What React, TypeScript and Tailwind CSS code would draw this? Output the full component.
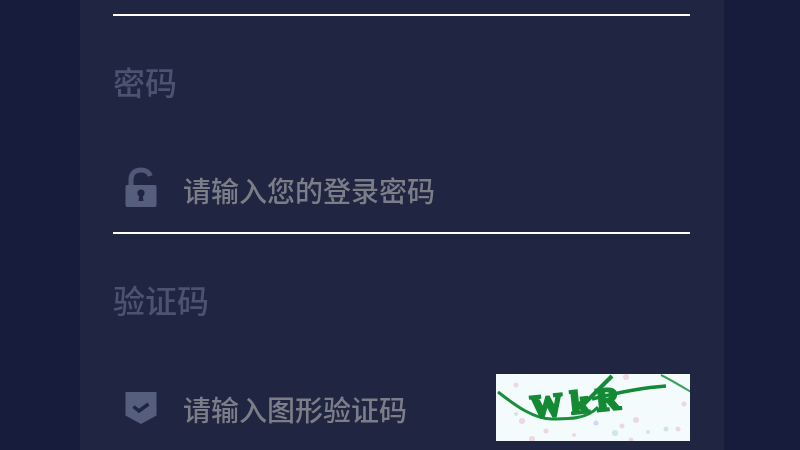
const font = "font-['Liberation_Sans','Noto_Sans_CJK_SC',sans-serif]";

function LockIcon() {
  return (
    <svg width="32" height="42" viewBox="0 0 32 42" className="mb-[4px] shrink-0 blur-[0.6px]">
      <path d="M6 20v-7.500C6 6.500 10 3 16 3c4.500 0 8 2.300 9.300 6" fill="none" stroke="#505877" strokeWidth="5" />
      <path d="M2 18h28a1.500 1.500 0 0 1 1.500 1.500V38a2 2 0 0 1-2 2h-27a2 2 0 0 1-2-2V19.500A1.500 1.500 0 0 1 2 18z" fill="#565e7d" />
      <circle cx="16" cy="26" r="3.600" fill="#202541" />
      <path d="M14.500 27h3l1 7h-5z" fill="#202541" />
    </svg>
  );
}

function ShieldIcon() {
  return (
    <svg width="32" height="34" viewBox="0 0 32 34" className="mb-[2px] shrink-0 blur-[0.6px]">
      <path d="M0.500 1h31v23.500L16 33 0.500 24.500z" fill="#565e7d" />
      <path d="M8.500 15.500l5.500 4.500 9.500-7" fill="none" stroke="#202541" strokeWidth="3.500" />
    </svg>
  );
}

function Captcha() {
  return (
    <svg width="194" height="67" viewBox="0 0 194 67" className="mb-[3px] shrink-0 bg-[#f4fbfd] blur-[0.6px]">
      <g fill="#ecd8df">
        <circle cx="20" cy="11" r="2.500" />
        <circle cx="26" cy="47" r="3" />
        <circle cx="50" cy="57" r="2.500" />
        <circle cx="78" cy="61" r="2" />
        <circle cx="130" cy="3" r="3" />
        <circle cx="140" cy="46" r="3" />
        <circle cx="126" cy="52" r="2.500" />
        <circle cx="188" cy="30" r="2.500" />
        <circle cx="182" cy="55" r="2.500" />
        <circle cx="135" cy="66" r="2.500" />
        <circle cx="36" cy="65" r="3" />
      </g>
      <g fill="#cfe6e2">
        <circle cx="119" cy="59" r="3" />
        <circle cx="170" cy="55" r="2.500" />
        <circle cx="152" cy="58" r="2" />
        <circle cx="20" cy="40" r="2" />
      </g>
      <circle cx="100" cy="49" r="2.500" fill="#d3daee" />
      <path d="M2 18C20 32 38 45 56 45c14 0 34 1 46-12" fill="none" stroke="#188f3c" strokeWidth="3" />
      <path d="M165 1c8 4 20 11 30 17" fill="none" stroke="#3ba25e" strokeWidth="2" />
      <path d="M84 34L116 2" fill="none" stroke="#138a33" strokeWidth="4" />
      <path d="M96 25C112 21 140 14 170 12" fill="none" stroke="#138a33" strokeWidth="3.500" />
      <text
        x="36"
        y="44"
        fill="#138a33"
        stroke="#138a33"
        strokeWidth="3"
        fontSize="32"
        fontWeight="700"
        letterSpacing="8"
        fontFamily="Liberation Serif, serif"
        transform="rotate(-6 36 44)"
      >
        WkR
      </text>
    </svg>
  );
}

function Field({
  icon,
  placeholder,
  underline,
  children,
}: {
  icon: React.ReactNode;
  placeholder: string;
  underline?: boolean;
  children?: React.ReactNode;
}) {
  return (
    <div className={underline ? "flex h-[86px] items-center border-b-2 border-white" : "flex h-[86px] items-center"}>
      <div className="flex w-[70px] justify-start pl-[12px]">{icon}</div>
      <span className="mt-[5px] flex-1 text-[28px] font-medium leading-none text-[#7b7e88] blur-[0.5px]">{placeholder}</span>
      {children}
    </div>
  );
}

function Label({ children }: { children: React.ReactNode }) {
  return (
    <div className="flex h-[132px] flex-col">
      <label className="mt-[52px] text-[32px] font-medium leading-none text-[#4c5372] blur-[0.5px]">{children}</label>
    </div>
  );
}

export default function App() {
  return (
    <div className={`${font} h-[450px] w-[800px] overflow-hidden bg-[#171c3c]`}>
      <div className="ml-[80px] h-full w-[644px] bg-[#202541] pl-[33px] pr-[34px]">
        <div className="h-[16px] border-b-2 border-white" />
        <Label>密码</Label>
        <Field icon={<LockIcon />} placeholder="请输入您的登录密码" underline />
        <Label>验证码</Label>
        <Field icon={<ShieldIcon />} placeholder="请输入图形验证码">
          <Captcha />
        </Field>
      </div>
    </div>
  );
}
